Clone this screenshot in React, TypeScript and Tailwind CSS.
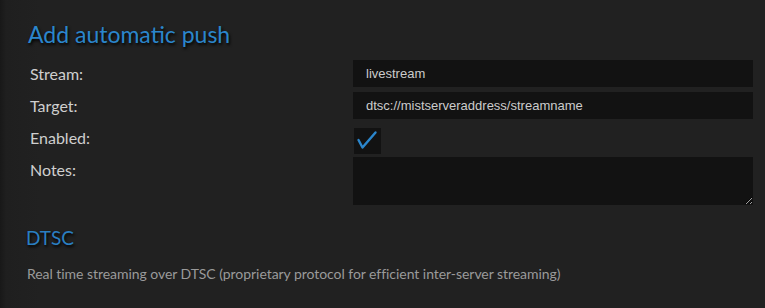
import React from "react";

export default function App() {
  return (
    <div className="w-[765px] h-[308px] overflow-hidden bg-[linear-gradient(to_right,#181818,#1f1f1f_6px,#212121_40px)] pl-[28px] pr-[12px] pt-[18px] font-['Lato',sans-serif]">
      <h1 className="text-[23px] leading-[32px] text-[#2b86cc] [text-shadow:1px_2px_3px_#000]">Add automatic push</h1>
      <div className="mt-[10px] grid grid-cols-[325px_400px] gap-y-[5px]">
        <label className="pl-[2px] text-[16px] leading-[27px] text-[#cfcfcf]">Stream:</label>
        <input readOnly value="livestream" className="h-[27px] bg-[#121212] px-[13px] text-[13px] text-[#cccccc] font-['Liberation_Sans',sans-serif] outline-none" />
        <label className="pl-[2px] text-[16px] leading-[27px] text-[#cfcfcf]">Target:</label>
        <input readOnly value="dtsc://mistserveraddress/streamname" className="h-[27px] bg-[#121212] px-[13px] text-[13px] text-[#cccccc] font-['Liberation_Sans',sans-serif] outline-none" />
        <label className="pl-[2px] text-[16px] leading-[27px] text-[#cfcfcf]">Enabled:</label>
        <div className="mt-[4px] ml-[1px] w-[27px] h-[26px] bg-[#121212]">
          <svg width="27" height="26" viewBox="0 0 27 26" fill="none">
            <path d="M4.5 12 L8.5 19.5 L21.5 4.5" stroke="#2b86cc" strokeWidth="2.4" strokeLinecap="round" strokeLinejoin="round" />
          </svg>
        </div>
        <label className="pl-[2px] text-[16px] leading-[27px] text-[#cfcfcf] -mt-[3px]">Notes:</label>
        <textarea readOnly className="-mt-[2px] h-[48px] bg-[#121212] resize-y outline-none text-[#ccc]" />
      </div>
      <h2 className="mt-[20px] -ml-[2px] text-[19px] leading-[26px] text-[#2a7fc2] [text-shadow:1px_2px_3px_#000]">DTSC</h2>
      <p className="mt-[14px] -ml-[1px] text-[14px] leading-[18px] tracking-[-0.05px] text-[#9a9a9a]">Real time streaming over DTSC (proprietary protocol for efficient inter-server streaming)</p>
    </div>
  );
}
